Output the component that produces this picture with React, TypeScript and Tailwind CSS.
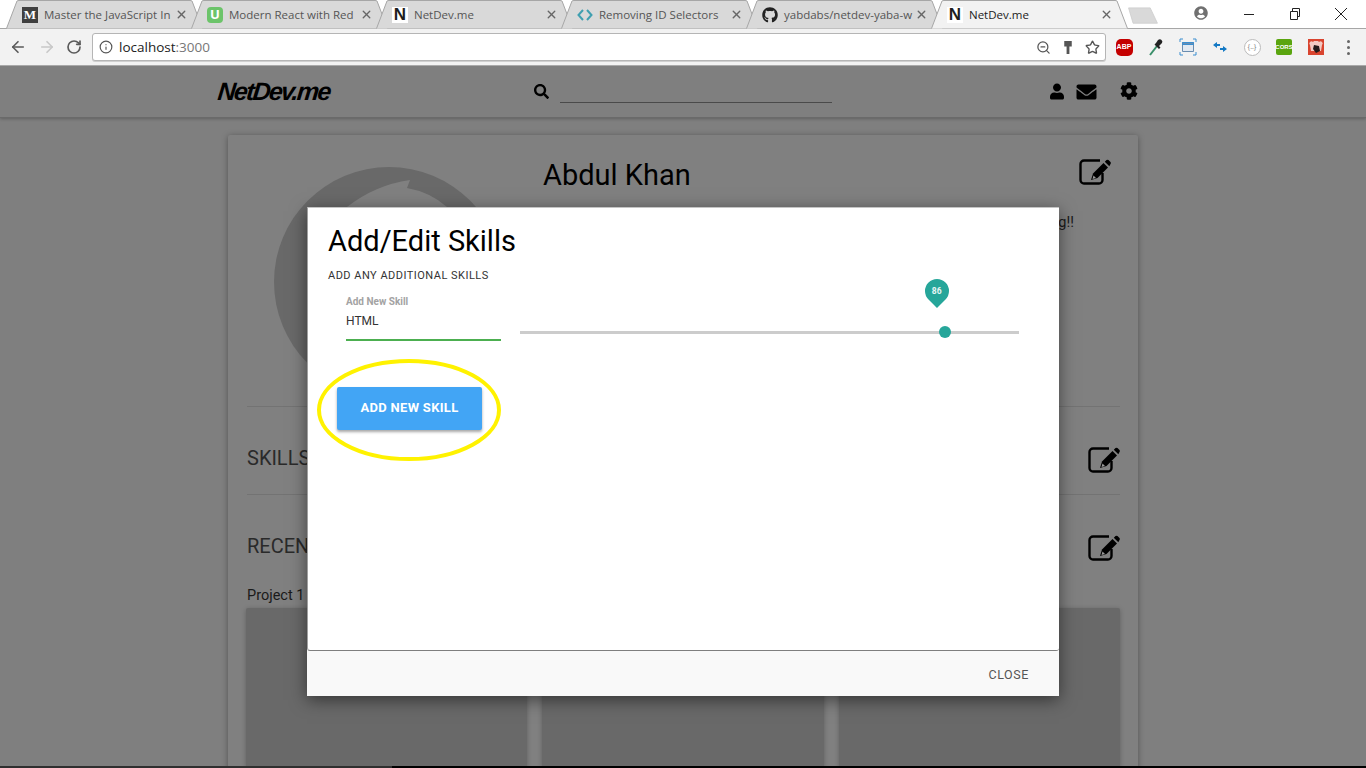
import { ArrowLeft, ArrowRight, Info, RotateCw, Star, X, ZoomOut } from "lucide-react";
import type { ReactNode } from "react";
import { FaCog, FaEnvelope, FaGithub, FaSearch, FaUser, FaUserCircle } from "react-icons/fa";

function Favicon({ kind }: { kind: string }) {
  if (kind === "m") {
    return (
      <span className="flex h-4 w-4 items-center justify-center bg-[#3f3f3f] font-['Liberation_Serif',serif] text-[13px] font-bold text-white">
        M
      </span>
    );
  }
  if (kind === "u") {
    return (
      <span className="flex h-4 w-4 items-center justify-center rounded-[4px] bg-[#6cc46a] text-[13px] font-bold text-white">
        U
      </span>
    );
  }
  if (kind === "n") {
    return (
      <span className="flex h-4 w-4 items-center justify-center bg-white font-['Liberation_Sans',sans-serif] text-[17px] font-bold text-[#1d1d1d]">
        N
      </span>
    );
  }
  if (kind === "code") {
    return (
      <svg viewBox="0 0 16 16" className="h-4 w-4 fill-none stroke-[#3f9fb0] stroke-2">
        <path d="M6 3 1.500 8 6 13M10 3l4.500 5L10 13" />
      </svg>
    );
  }
  return <FaGithub className="h-4 w-4 text-[#222]" />;
}

const tabs = [
  { icon: "m", title: "Master the JavaScript In" },
  { icon: "u", title: "Modern React with Red" },
  { icon: "n", title: "NetDev.me" },
  { icon: "code", title: "Removing ID Selectors" },
  { icon: "gh", title: "yabdabs/netdev-yaba-w" },
  { icon: "n", title: "NetDev.me", active: true },
];

function Tab({ icon, title, active }: { icon: string; title: string; active?: boolean }) {
  return (
    <div className={`relative -mr-[12px] flex h-[29px] w-[197px] shrink-0 items-center pl-[16px] ${active ? "z-10" : ""}`}>
      <svg viewBox="0 0 197 29" className="absolute inset-0 h-[29px] w-[197px]">
        <path
          d="M0.500 28.500 L11 1 Q11.500 0.500 13 0.500 L184 0.500 Q185.500 0.500 186 1 L196.500 28.500"
          fill={active ? "#f2f2f2" : "#d9d9d9"}
          stroke="#a6a6a6"
        />
      </svg>
      <span className="relative flex w-[16px] justify-center">
        <Favicon kind={icon} />
      </span>
      <span className={`relative ml-[6px] mt-[1px] w-[126px] whitespace-nowrap text-[11.500px] ${active ? "text-[#222]" : "text-[#555]"}`}>
        {title}
      </span>
      <X className="relative ml-[5px] h-[13px] w-[13px] text-[#666]" strokeWidth={2.500} />
    </div>
  );
}

function ExtIcon({ children }: { children: ReactNode }) {
  return <span className="flex w-[32px] shrink-0 items-center justify-center">{children}</span>;
}

function EditIcon({ className }: { className: string }) {
  return (
    <svg viewBox="0 0 32 26" className={`h-[26px] w-[32px] shrink-0 ${className}`}>
      <path
        d="M21 1.500H5A3.500 3.500 0 0 0 1.500 5V21A3.500 3.500 0 0 0 5 24.500H20A3.500 3.500 0 0 0 23.500 21V14"
        fill="none"
        stroke="#000"
        strokeWidth="2.400"
      />
      <path d="M14 14.500 24.500 4 29 8.500 18.500 19 12 21Z" fill="#000" />
      <path d="M25.800 2.700 27.500 1Q28.500 0.300 29.500 1L31.500 3Q32.200 4 31.500 5L30.300 7.200Z" fill="#000" />
      <path d="M14.500 16.500 17 19 13.500 20Z" fill="#9a9a9a" />
    </svg>
  );
}

function BrowserChrome() {
  return (
    <>
      <div className="relative flex h-[29px] items-start bg-white pl-[6px] font-['Open_Sans',sans-serif]">
        <div className="absolute bottom-0 left-0 right-0 h-px bg-[#a6a6a6]" />
        {tabs.map((t, i) => (
          <Tab key={i} icon={t.icon} title={t.title} active={t.active} />
        ))}
        <svg viewBox="0 0 34 20" className="relative ml-[10px] mt-[7px] h-[18px] w-[34px] shrink-0">
          <path d="M1 1h24l8 17H6z" fill="#d9d9d9" stroke="#cfcfcf" />
        </svg>
        <FaUserCircle className="ml-[34px] mt-[6px] h-[14px] w-[14px] shrink-0 text-[#707070]" />
        <svg viewBox="0 0 12 12" className="ml-[35px] mt-[8px] h-[12px] w-[12px] shrink-0 stroke-[#222]">
          <path d="M1 6.500h10" />
        </svg>
        <svg viewBox="0 0 12 12" className="ml-[34px] mt-[8px] h-[12px] w-[12px] shrink-0 fill-none stroke-[#222]">
          <path d="M1.500 3.500h7v8h-7zM3.500 3.500v-3h7v8h-2" />
        </svg>
        <svg viewBox="0 0 14 14" className="ml-[33px] mt-[7px] h-[14px] w-[14px] shrink-0 stroke-[#222]">
          <path d="M1 1l12 12M13 1 1 13" />
        </svg>
      </div>
      <div className="flex h-[36px] items-center bg-[#f2f2f2] font-['Open_Sans',sans-serif]">
        <ArrowLeft className="ml-[9px] h-[18px] w-[18px] text-[#5a5a5a]" strokeWidth={2.200} />
        <ArrowRight className="ml-[11px] h-[18px] w-[18px] text-[#c8c8c8]" strokeWidth={2.200} />
        <RotateCw className="ml-[10px] h-[16px] w-[16px] text-[#5a5a5a]" strokeWidth={2.500} />
        <div className="ml-[10px] flex h-[28px] w-[1014px] items-center rounded-[3px] border border-[#b5b5b5] bg-white pl-[6px] shadow-[0_1px_0_#cfcfcf]">
          <Info className="h-[14px] w-[14px] text-[#555]" strokeWidth={2} />
          <span className="ml-[6px] text-[13.500px] text-[#222]">
            localhost<span className="text-[#777]">:3000</span>
          </span>
          <ZoomOut className="ml-auto h-[15px] w-[15px] text-[#555]" strokeWidth={2} />
          <svg viewBox="0 0 10 16" className="ml-[12px] h-[15px] w-[10px] fill-[#555]">
            <path d="M1 1h8v6H6.500v8h-3V7H1z" />
          </svg>
          <Star className="ml-[12px] mr-[5px] h-[15px] w-[15px] text-[#555]" strokeWidth={2.200} />
        </div>
        <div className="ml-[2px] flex items-center">
          <ExtIcon>
            <span className="flex h-[17px] w-[17px] items-center justify-center rounded-[5px] bg-[#c40000] font-['Liberation_Sans',sans-serif] text-[7px] font-bold text-white">
              ABP
            </span>
          </ExtIcon>
          <ExtIcon>
            <svg viewBox="0 0 16 18" className="h-[18px] w-[16px]">
              <path d="M2 17 9 8" stroke="#3a8f6a" strokeWidth="2" />
              <path d="M6.500 6.500 11 11l1.500-1.500L11 8l3-3q1-1.500-.5-3T10 2L8 5 6.500 6.500z" fill="#222" />
            </svg>
          </ExtIcon>
          <ExtIcon>
            <svg viewBox="0 0 18 18" className="h-[18px] w-[18px] fill-none stroke-[#3a8ed0]">
              <path d="M1 4V1h3M14 1h3v3M17 14v3h-3M4 17H1v-3" />
              <path d="M3.500 4.500h11v9h-11z" fill="#e2e9f1" stroke="#6a8db0" />
              <path d="M3.500 4.500h11v2h-11z" fill="#6a8db0" />
            </svg>
          </ExtIcon>
          <ExtIcon>
            <svg viewBox="0 0 16 12" className="h-[12px] w-[16px] fill-[#1479c4]">
              <path d="M1 4l4-3v2h3v2H5v2zM15 8l-4 3V9H8V7h3V5z" />
            </svg>
          </ExtIcon>
          <ExtIcon>
            <span className="flex h-[17px] w-[17px] items-center justify-center rounded-full border border-[#bbb] bg-white text-[7px] text-[#777]">
              {"{..}"}
            </span>
          </ExtIcon>
          <ExtIcon>
            <span className="flex h-[16px] w-[16px] items-center justify-center rounded-[2px] bg-[#5aa50f] font-['Liberation_Sans',sans-serif] text-[6px] font-bold text-white">
              CORS
            </span>
          </ExtIcon>
          <ExtIcon>
            <svg viewBox="0 0 16 16" className="h-[16px] w-[16px]">
              <path d="M0 0h16v16H0z" fill="#d9442f" />
              <path d="M2 6a2 2 0 0 1 3-3l1-1h4l1 1a2 2 0 0 1 3 3l-1 6H3z" fill="#f3c9c2" />
              <path d="M6 6l5 1 1 5-4 2-3-4z" fill="#241a1a" />
            </svg>
          </ExtIcon>
          <ExtIcon>
            <span className="flex flex-col gap-[3px]">
              <span className="h-[3px] w-[3px] rounded-full bg-[#666]" />
              <span className="h-[3px] w-[3px] rounded-full bg-[#666]" />
              <span className="h-[3px] w-[3px] rounded-full bg-[#666]" />
            </span>
          </ExtIcon>
        </div>
      </div>
      <div className="h-px bg-[#a9a9a9]" />
    </>
  );
}

function Navbar() {
  return (
    <div className="flex h-[52px] items-center border-b border-[#6a6a6a] pl-[218px] shadow-[0_1px_3px_rgba(0,0,0,0.25)]">
      <span className="w-[316px] -skew-x-6 font-['Liberation_Sans',sans-serif] text-[25px] font-bold italic leading-none tracking-[-1.800px] text-black">
        NetDev.me
      </span>
      <FaSearch className="h-[15px] w-[15px] text-black" />
      <div className="ml-[11px] mt-[22px] h-px w-[272px] bg-[#4a4a4a]" />
      <FaUser className="ml-[218px] h-[17px] w-[14px] text-black" />
      <FaEnvelope className="ml-[12px] h-[20px] w-[21px] text-black" />
      <FaCog className="-mt-[1px] ml-[23px] h-[18px] w-[18px] text-black" />
    </div>
  );
}

function ProfileCard() {
  return (
    <div className="ml-[228px] mt-[17px] h-[700px] w-[910px] rounded-[2px] bg-[#808080] pl-[19px] pr-[18px] shadow-[0_1px_6px_rgba(0,0,0,0.35)]">
      <div className="flex h-[272px] items-start border-b border-[#737373]">
        <svg viewBox="0 0 230 230" className="ml-[27px] mt-[32px] h-[230px] w-[230px] shrink-0">
          <circle cx="115" cy="115" r="115" fill="#696969" />
          <path d="M73 40Q101 18 136 13L133 21Q156 25 173 40V200H73Z" fill="#808080" />
        </svg>
        <div className="ml-[39px] mt-[22px] flex-1">
          <div className="text-[29px] leading-[36px] text-black">Abdul Khan</div>
          <p className="mr-[5px] mt-[20px] text-right text-[14.500px] leading-[20px] text-[#1a1a1a]">
            Software engineer who loves coding!!
          </p>
        </div>
        <EditIcon className="mr-[9px] mt-[24px]" />
      </div>
      <div className="flex h-[88px] items-start justify-between border-b border-[#737373] pt-[37px]">
        <h2 className="text-[20px] leading-[28px] text-[#2a2a2a]">SKILLS</h2>
        <EditIcon className="mt-[3px]" />
      </div>
      <div className="flex items-start justify-between pt-[37px]">
        <h2 className="text-[20px] leading-[28px] text-[#2a2a2a]">RECENT PROJECTS</h2>
        <EditIcon className="mt-[3px]" />
      </div>
      <div className="mt-[25px] text-[14.500px] leading-[20px] text-[#1a1a1a]">Project 1</div>
      <div className="-ml-px mt-[2px] grid grid-cols-3 gap-[15px]">
        <div className="h-[160px] rounded-[2px] bg-[#696969] shadow-[0_1px_5px_rgba(0,0,0,0.25)]" />
        <div className="h-[160px] rounded-[2px] bg-[#696969] shadow-[0_1px_5px_rgba(0,0,0,0.25)]" />
        <div className="h-[160px] rounded-[2px] bg-[#696969] shadow-[0_1px_5px_rgba(0,0,0,0.25)]" />
      </div>
    </div>
  );
}

function SkillsModal() {
  return (
    <div className="absolute left-[307px] top-[207px] flex h-[489px] w-[752px] flex-col bg-[#f9f9f9] shadow-[0_4px_16px_rgba(0,0,0,0.5)]">
      <div className="h-[444px] rounded-b-[3px] border-b border-l border-t border-b-[#7f7f7f] border-l-[#a0a0a0] border-t-[#c4c4c4] bg-white pl-[20px]">
        <h1 className="pt-[16px] text-[29px] leading-[34px] text-black">Add/Edit Skills</h1>
        <p className="mt-[11px] text-[11px] leading-[14px] tracking-[0.480px] text-[#333]">ADD ANY ADDITIONAL SKILLS</p>
        <div className="ml-[18px] mt-[13px] flex items-start">
          <div className="w-[155px]">
            <div className="text-[10px] font-bold leading-[12px] text-[#a3a3a3]">Add New Skill</div>
            <div className="mt-[5px] text-[12px] leading-[16px] text-[#333]">HTML</div>
            <div className="mt-[10px] h-[2px] bg-[#4caf50]" />
          </div>
          <div className="relative ml-[19px] mt-[35px] h-[3px] w-[499px] bg-[#cccccc]">
            <div className="absolute left-[419px] top-[-5px] h-[12px] w-[12px] rounded-full bg-[#26a69a]" />
            <div className="absolute left-[405px] top-[-52px] flex h-[24px] w-[24px] rotate-45 items-center justify-center rounded-[50%_50%_0_50%] bg-[#26a69a]">
              <span className="-rotate-45 text-[8.500px] font-bold text-white/90">86</span>
            </div>
          </div>
        </div>
        <div className="relative ml-[9px] mt-[46px] w-[145px]">
          <button
            type="button"
            className="h-[43px] w-[145px] rounded-[2px] bg-[#42a5f5] pb-[2px] text-[13px] font-bold tracking-[0.300px] text-white shadow-[0_2px_3px_rgba(0,0,0,0.35)]"
          >
            ADD NEW SKILL
          </button>
          <svg viewBox="0 0 186 104" className="absolute left-[-21px] top-[-29px] h-[104px] w-[186px]">
            <ellipse cx="93" cy="52" rx="90" ry="49" fill="none" stroke="#fff200" strokeWidth="4" />
          </svg>
        </div>
      </div>
      <div className="flex flex-1 items-center justify-end pr-[30px] pt-[4px]">
        <span className="text-[12.500px] tracking-[0.600px] text-[#555]">CLOSE</span>
      </div>
    </div>
  );
}

export default function App() {
  return (
    <div className="relative h-[768px] w-[1366px] overflow-hidden font-['Roboto',sans-serif]">
      <BrowserChrome />
      <div className="h-[700px] overflow-hidden bg-[#7f7f7f]">
        <Navbar />
        <ProfileCard />
      </div>
      <div className="flex h-[2px]">
        <div className="w-[392px] bg-[#2f2f2f]" />
        <div className="flex-1 bg-black" />
      </div>
      <SkillsModal />
    </div>
  );
}
